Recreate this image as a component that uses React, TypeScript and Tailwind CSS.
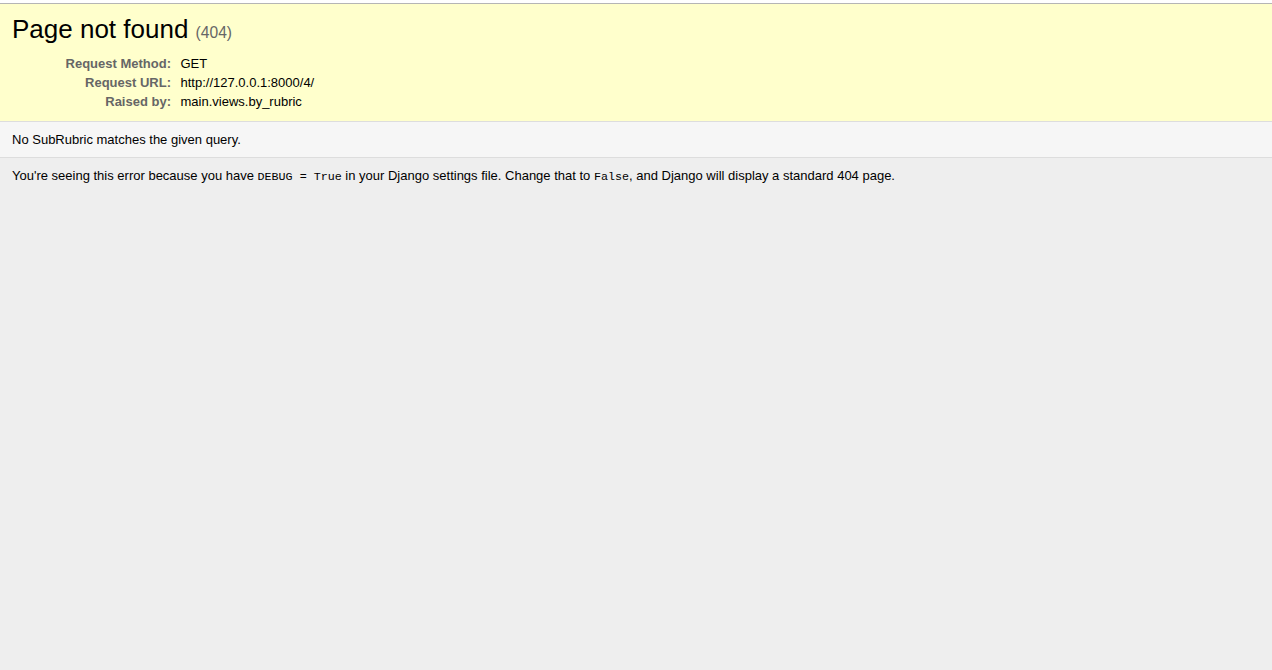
import React from "react";

const requestInfo = [
  { label: "Request Method:", value: "GET" },
  { label: "Request URL:", value: "http://127.0.0.1:8000/4/" },
  { label: "Raised by:", value: "main.views.by_rubric" },
];

export default function App() {
  return (
    <div className="min-h-screen flex flex-col bg-[#eeeeee] text-[13px] text-black font-['Liberation_Sans',Arial,sans-serif]">
      <div className="h-[3px] bg-white" />
      <div className="border-t border-[#b5b5b5]" />

      {/* summary */}
      <div className="bg-[#ffffcc] pl-[12px] pr-[20px] pt-[10px] pb-[10px] border-b border-[#ddd]">
        <h1 className="text-[26px] leading-[30px] font-normal mb-[6px]">
          Page not found <span className="text-[15.6px] text-[#666]">(404)</span>
        </h1>
        <table className="border-collapse">
          <tbody>
            {requestInfo.map((row) => (
              <tr key={row.label}>
                <th className="w-[156px] box-content text-right align-top font-bold text-[#666] leading-[15px] pt-[2px] pb-[2px] pl-[3px] pr-[6.5px]">
                  {row.label}
                </th>
                <td className="align-top leading-[15px] py-[2px] px-[3px]">{row.value}</td>
              </tr>
            ))}
          </tbody>
        </table>
      </div>

      {/* info */}
      <div className="bg-[#f6f6f6] pl-[12px] pt-[10px] pb-[10px] border-b border-[#ddd]">
        <p className="leading-[15px]">No SubRubric matches the given query.</p>
      </div>

      {/* explanation */}
      <div className="flex-1 bg-[#eeeeee] pl-[12px] pt-[10px]">
        <p className="leading-[15px]">
          You're seeing this error because you have{" "}
          <code className="font-['Liberation_Mono','Courier_New',monospace] text-[11.7px]">DEBUG = True</code> in your
          Django settings file. Change that to{" "}
          <code className="font-['Liberation_Mono','Courier_New',monospace] text-[11.7px]">False</code>, and Django
          will display a standard 404 page.
        </p>
      </div>
    </div>
  );
}
